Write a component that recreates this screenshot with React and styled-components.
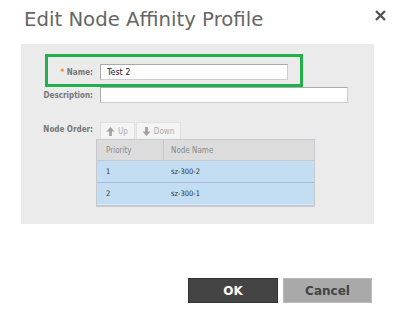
import React from 'react'
import styled, { createGlobalStyle } from 'styled-components';

const Global = createGlobalStyle`
  html, body { margin: 0; padding: 0; background: #fff; }
  body { font-family: "DejaVu Sans", "Liberation Sans", sans-serif; }
`

function Arrow({ down }) {
  return (
    <svg width="9" height="9" viewBox="0 0 10 10">
      <path
        d={down ? 'M3.5 0h3v5h3L5 10 0.5 5h3z' : 'M3.5 10h3V5h3L5 0 0.5 5h3z'}
        fill="#a0a0a0"
      />
    </svg>
  )
}

function CloseIcon() {
  return (
    <svg width="11" height="11" viewBox="0 0 11 11">
      <path d="M1 1L10 10M10 1L1 10" stroke="#555" strokeWidth="2.4" />
    </svg>
  )
}

const rows = [
  { priority: '1', name: 'sz-300-2' },
  { priority: '2', name: 'sz-300-1' },
]

function App() {
  return (
    <Page>
      <Global />
      <Header>
        <Title>Edit Node Affinity Profile</Title>
        <Close><CloseIcon /></Close>
      </Header>
      <Panel>
        <Highlight />
        <Form>
          <Label><Star>*</Star> Name:</Label>
          <Input value="Test 2" readOnly width="188px" />
          <Label>Description:</Label>
          <Input value="" readOnly width="248px" />
          <Label nudge>Node Order:</Label>
          <div>
            <Tools>
              <ToolButton><Arrow /> Up</ToolButton>
              <ToolButton><Arrow down /> Down</ToolButton>
            </Tools>
            <Table>
              <HeadRow>
                <Cell>Priority</Cell>
                <Cell last>Node Name</Cell>
              </HeadRow>
              {rows.map(r => (
                <Row key={r.priority}>
                  <Cell>{r.priority}</Cell>
                  <Cell last>{r.name}</Cell>
                </Row>
              ))}
            </Table>
          </div>
        </Form>
      </Panel>
      <Footer>
        <Button primary>OK</Button>
        <Button>Cancel</Button>
      </Footer>
    </Page>
  )
}

export default App

const Page = styled.div`
width: 400px;
height: 330px;
position: relative;
overflow: hidden;
`

const Header = styled.div`
height: 44px;
display: flex;
justify-content: space-between;
padding-left: 24px;
padding-right: 14px;
box-sizing: border-box;
`

const Title = styled.div`
margin-top: 8px;
font-size: 19.7px;
line-height: 24px;
color: #666;
font-family: "DejaVu Sans", sans-serif;
`

const Close = styled.div`
margin-top: 6px;
`

const Panel = styled.div`
position: relative;
margin-left: 21px;
width: 353px;
height: 180px;
background: #ebebeb;
padding-top: 20px;
box-sizing: border-box;
`

const Highlight = styled.div`
position: absolute;
left: 24px;
top: 10px;
width: 258px;
height: 33px;
border: 3px solid #22b04b;
box-sizing: border-box;
pointer-events: none;
`

const Form = styled.div`
display: grid;
grid-template-columns: 72px auto;
column-gap: 7px;
row-gap: 7px;
align-items: center;
justify-items: start;
`

const Label = styled.div`
justify-self: end;
align-self: ${p => p.nudge ? 'start' : 'center'};
margin-top: ${p => p.nudge ? '15px' : '0'};
font-size: 8px;
font-weight: 700;
color: #777;
white-space: nowrap;
font-family: "DejaVu Sans Condensed", "DejaVu Sans", sans-serif;
`

const Star = styled.span`
color: #f08a24;
`

const Input = styled.input`
width: ${p => p.width};
height: 16px;
box-sizing: border-box;
border: 1px solid #aaa;
border-right-color: #ccc;
border-bottom-color: #ccc;
background: #fff;
padding: 0 6px;
font-size: 9px;
font-family: "DejaVu Sans Condensed", "DejaVu Sans", sans-serif;
color: #222;
outline: none;
`

const Tools = styled.div`
display: flex;
gap: 1px;
margin-top: 12px;
`

const ToolButton = styled.div`
height: 17px;
padding: 0 6px 0 5px;
display: flex;
align-items: center;
gap: 3px;
background: #f4f4f4;
border: 1px solid #e0e0e0;
border-bottom: none;
box-sizing: border-box;
font-size: 8px;
color: #aaa;
font-family: "DejaVu Sans Condensed", "DejaVu Sans", sans-serif;
`

const Table = styled.div`
margin-left: -4px;
width: 219px;
border: 1px solid #c8c8d0;
border-bottom-width: 2px;
box-sizing: border-box;
background: #c3def3;
font-family: "DejaVu Sans Condensed", "DejaVu Sans", sans-serif;
`

const HeadRow = styled.div`
display: flex;
height: 20px;
align-items: center;
background: #dcdcdc;
border-bottom: 1px solid #c8c8d0;
color: #888;
font-size: 8px;
`

const Row = styled.div`
display: flex;
height: 21px;
align-items: center;
border-bottom: 1px solid #a9bdd6;
color: #333;
font-size: 7.5px;
&:last-child { border-bottom: 1px solid #d8e8f6; }
`

const Cell = styled.div`
width: ${p => p.last ? 'auto' : '66px'};
flex: ${p => p.last ? '1' : 'none'};
height: 100%;
display: flex;
align-items: center;
padding-left: ${p => p.last ? '7px' : '9px'};
box-sizing: border-box;
border-left: ${p => p.last ? '1px solid #c8c8d0' : 'none'};
${Row} & { border-left: none; padding-left: ${p => p.last ? '8px' : '9px'}; }
`

const Footer = styled.div`
display: flex;
gap: 5px;
padding-left: 188px;
margin-top: 54px;
`

const Button = styled.div`
width: ${p => p.primary ? '90px' : '89px'};
height: 25px;
box-sizing: border-box;
display: flex;
align-items: center;
justify-content: center;
background: ${p => p.primary ? '#444' : '#a9a9a9'};
border: 1px solid ${p => p.primary ? '#333' : '#bbb'};
color: ${p => p.primary ? '#fff' : '#444'};
font-size: 12px;
font-weight: 700;
font-family: "DejaVu Sans", sans-serif;
`
